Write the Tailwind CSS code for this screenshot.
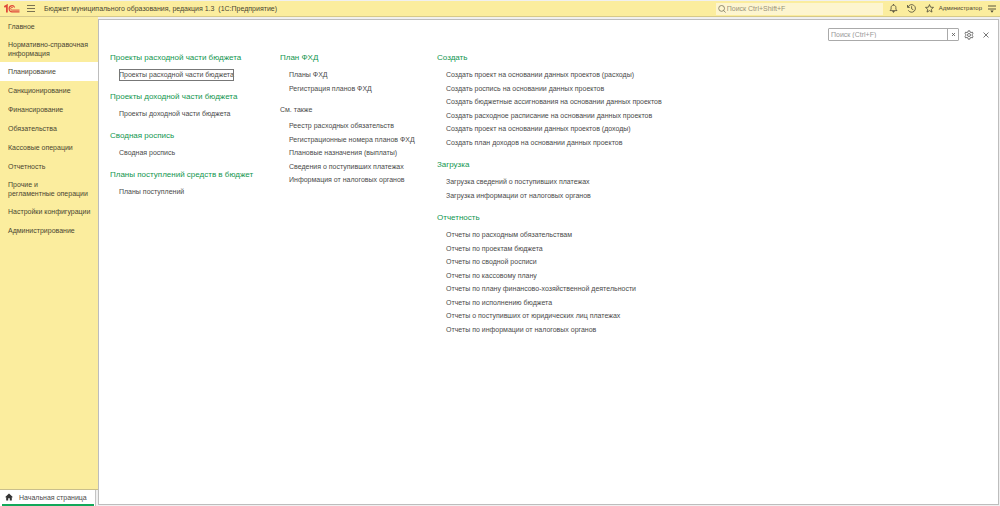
<!DOCTYPE html>
<html lang="ru">
<head>
<meta charset="utf-8">
<meta name="viewport" content="width=device-width, initial-scale=1">
<title>Бюджет муниципального образования</title>
<script src="https://cdn.jsdelivr.net/npm/@tailwindcss/browser@4"></script>
</head>
<body class="flex h-screen flex-col overflow-hidden bg-[#f0f0f0] font-['Liberation_Sans',Arial,sans-serif] text-[7px] leading-[9px] text-[#4a4a4a]">
<header class="mt-px flex h-4 shrink-0 items-center border-b border-[#d6c98a] bg-[#fbed9e] text-[#4a4632]">
  <svg class="ml-1 h-[9px] w-4 shrink-0" viewBox="0 0 16 9" fill="none" stroke="#e0483a" role="img" aria-label="1С">
    <path stroke-width="1.8" d="M.3 2.9 2.9 1.4V8.4"/>
    <path stroke-width="1.2" d="M10.6 3.4A2.9 3.1 0 1 0 8 7.9H15.5"/>
    <path stroke-width="1" d="M9 3.8A1.3 1.4 0 1 0 8.1 6.1H15.5"/>
  </svg>
  <button class="ml-[7px] h-[9px] w-2 shrink-0" aria-label="Меню">
    <svg class="h-[9px] w-2" viewBox="0 0 8 9" stroke="#7a7354" stroke-width="1" fill="none"><path d="M0 1.5h8M0 4.5h8M0 7.5h8"/></svg>
  </button>
  <h1 class="ml-[9px] whitespace-pre text-[7px]">Бюджет муниципального образования, редакция 1.3  (1С:Предприятие)</h1>
  <label class="ml-auto flex h-3 w-[167px] items-center gap-px bg-[#fdf5cf] pl-[2px]">
    <svg class="h-2 w-2 shrink-0" viewBox="0 0 8 8" fill="none" stroke="#77725a" stroke-width=".8"><circle cx="3.6" cy="3.4" r="2.9"/><path d="m5.6 5.5 2.1 2.1"/></svg>
    <input class="min-w-0 flex-1 bg-transparent text-[7px] outline-none placeholder:text-[#99937a]" type="text" aria-label="Глобальный поиск" placeholder="Поиск Ctrl+Shift+F">
  </label>
  <button class="ml-[6px] size-[9px] shrink-0" aria-label="Уведомления">
    <svg class="size-[9px]" viewBox="0 0 9 9" fill="none" stroke="#4b4737" stroke-width=".8"><path d="M1 6.6h7L6.9 5.2V3.6C6.9 2 5.9 1.2 4.5 1.2S2.1 2 2.1 3.6v1.6zM4.5 0v1.2"/><path d="M3.6 7.6h1.8L4.5 8.3z" fill="#4b4737"/></svg>
  </button>
  <button class="ml-[9px] size-[9px] shrink-0" aria-label="История">
    <svg class="size-[9px]" viewBox="0 0 9 9" fill="none" stroke="#4b4737" stroke-width=".8"><path d="M1 3.2A3.8 3.8 0 1 1 1.3 6.3M.5 1v2.4h2.3M4.6 2.2v2.6l1.8 1"/></svg>
  </button>
  <button class="ml-[9px] size-[9px] shrink-0" aria-label="Избранное">
    <svg class="size-[9px]" viewBox="0 0 9 9" fill="none" stroke="#4b4737" stroke-width=".8"><path d="m4.5.6 1.1 2.6 2.9.2-2.2 1.9.7 2.8-2.5-1.5L2 8.1l.7-2.8L.5 3.4l2.9-.2z"/></svg>
  </button>
  <a href="#" class="ml-[5px] text-[6px]">Администратор</a>
  <button class="mr-1 ml-[6px] h-[9px] w-2 shrink-0" aria-label="Настройки окна">
    <svg class="h-[9px] w-2" viewBox="0 0 8 9" fill="none" stroke="#4b4737" stroke-width=".9"><path d="M0 2h8M0 5h8"/><path d="M2.3 6.6h3.4L4 8.8z" fill="#4b4737" stroke="none"/></svg>
  </button>
</header>
<div class="flex min-h-0 flex-1">
  <div class="flex w-[98px] shrink-0 flex-col">
    <nav class="flex min-h-0 flex-1 flex-col border-b border-[#c9bf8c] bg-[#fbed9e] text-[#4a4632]" aria-label="Разделы">
      <a href="#" class="py-[5px] pl-2">Главное</a>
      <a href="#" class="py-1 pl-2">Нормативно-справочная<br>информация</a>
      <a href="#" class="bg-white py-[5px] pl-2" aria-current="page">Планирование</a>
      <a href="#" class="py-[5px] pl-2">Санкционирование</a>
      <a href="#" class="py-[5px] pl-2">Финансирование</a>
      <a href="#" class="py-[5px] pl-2">Обязательства</a>
      <a href="#" class="py-[5px] pl-2">Кассовые операции</a>
      <a href="#" class="py-[5px] pl-2">Отчетность</a>
      <a href="#" class="py-1 pl-2">Прочие и<br>регламентные операции</a>
      <a href="#" class="py-[5px] pl-2">Настройки конфигурации</a>
      <a href="#" class="py-[5px] pl-2">Администрирование</a>
    </nav>
    <div class="flex h-4 bg-[#f0f0f0] pr-[2px]">
      <button class="flex h-4 flex-1 items-center border-r border-[#c4c4c4] bg-white pr-px pl-[2px]">
        <span class="flex h-4 flex-1 items-center border-b-2 border-[#12a85a] pl-[3px]">
          <svg class="h-2 w-2" viewBox="0 0 8 8" fill="#333"><path d="M4 .4 0 4.2h1.2V7.6h2V5.2h1.6v2.4h2V4.2H8z"/></svg>
          <span class="ml-[6px] whitespace-nowrap">Начальная страница</span>
        </span>
      </button>
    </div>
  </div>
  <main class="mt-[2px] mr-px mb-px flex min-w-0 flex-1 flex-col border border-[#bdbdbd] bg-white">
    <div class="mt-2 mr-2 flex h-[13px] shrink-0 items-center justify-end">
      <div class="flex h-[13px] w-[131px] rounded-[1px] border border-[#aaa]">
        <input class="min-w-0 flex-1 pl-[2px] text-[7px] outline-none placeholder:text-[#999]" type="text" aria-label="Поиск" placeholder="Поиск (Ctrl+F)">
        <button class="flex w-[11px] items-center justify-center border-l border-[#aaa]" aria-label="Очистить">
          <svg class="size-[3px]" viewBox="0 0 3 3" stroke="#555" stroke-width=".8"><path d="m0 0 3 3M3 0 0 3"/></svg>
        </button>
      </div>
      <button class="ml-[5px] size-[10px]" aria-label="Настройки">
        <svg class="size-[10px]" viewBox="0 0 10 10" fill="none" stroke="#555" stroke-width=".8"><path d="M4.2.8h1.6l.3 1.3.9.5 1.3-.5.8 1.4-1 .9v1.2l1 .9-.8 1.4L7 7.4l-.9.5-.3 1.3H4.2l-.3-1.3-.9-.5-1.3.5-.8-1.4 1-.9V4.4l-1-.9.8-1.4 1.3.5.9-.5z"/><circle cx="5" cy="5" r="1.5"/></svg>
      </button>
      <button class="ml-2 flex size-2 items-center justify-center" aria-label="Закрыть">
        <svg class="size-[6px]" viewBox="0 0 6 6" stroke="#555" stroke-width=".8"><path d="m.5.5 5 5M5.5.5l-5 5"/></svg>
      </button>
    </div>
    <div class="grid grid-cols-[170px_157px_1fr] pt-[9px] pl-[11px] whitespace-nowrap [&_a]:block [&_h2]:mb-[3px] [&_h2]:text-[8px] [&_h2]:leading-[15px] [&_h2]:text-[#12964f] [&_li:nth-child(even)]:leading-[13px] [&_li:nth-child(odd)]:leading-[14px] [&_ul]:pl-[9px]">
      <div class="flex flex-col gap-[7px]">
        <section><h2>Проекты расходной части бюджета</h2>
          <ul><li class="flex h-[14px] items-center"><a href="#" class="leading-[12px] outline -outline-offset-1 outline-[#777]">Проекты расходной части бюджета</a></li></ul></section>
        <section><h2>Проекты доходной части бюджета</h2>
          <ul><li><a href="#">Проекты доходной части бюджета</a></li></ul></section>
        <section><h2>Сводная роспись</h2>
          <ul><li><a href="#">Сводная роспись</a></li></ul></section>
        <section><h2>Планы поступлений средств в бюджет</h2>
          <ul><li><a href="#">Планы поступлений</a></li></ul></section>
      </div>
      <div class="flex flex-col gap-[7px]">
        <section><h2>План ФХД</h2>
          <ul><li><a href="#">Планы ФХД</a></li><li><a href="#">Регистрация планов ФХД</a></li></ul></section>
        <section><h3 class="mb-[2px] leading-[15px]">См. также</h3>
          <ul>
            <li><a href="#">Реестр расходных обязательств</a></li>
            <li><a href="#">Регистрационные номера планов ФХД</a></li>
            <li><a href="#">Плановые назначения (выплаты)</a></li>
            <li><a href="#">Сведения о поступивших платежах</a></li>
            <li><a href="#">Информация от налоговых органов</a></li>
          </ul></section>
      </div>
      <div class="flex flex-col gap-2">
        <section><h2>Создать</h2>
          <ul>
            <li><a href="#">Создать проект на основании данных проектов (расходы)</a></li>
            <li><a href="#">Создать роспись на основании данных проектов</a></li>
            <li><a href="#">Создать бюджетные ассигнования на основании данных проектов</a></li>
            <li><a href="#">Создать расходное расписание на основании данных проектов</a></li>
            <li><a href="#">Создать проект на основании данных проектов (доходы)</a></li>
            <li><a href="#">Создать план доходов на основании данных проектов</a></li>
          </ul></section>
        <section><h2>Загрузка</h2>
          <ul>
            <li><a href="#">Загрузка сведений о поступивших платежах</a></li>
            <li><a href="#">Загрузка информации от налоговых органов</a></li>
          </ul></section>
        <section><h2>Отчетность</h2>
          <ul>
            <li><a href="#">Отчеты по расходным обязательствам</a></li>
            <li><a href="#">Отчеты по проектам бюджета</a></li>
            <li><a href="#">Отчеты по сводной росписи</a></li>
            <li><a href="#">Отчеты по кассовому плану</a></li>
            <li><a href="#">Отчеты по плану финансово-хозяйственной деятельности</a></li>
            <li><a href="#">Отчеты по исполнению бюджета</a></li>
            <li><a href="#">Отчеты о поступивших от юридических лиц платежах</a></li>
            <li><a href="#">Отчеты по информации от налоговых органов</a></li>
          </ul></section>
      </div>
    </div>
  </main>
</div>
</body>
</html>
